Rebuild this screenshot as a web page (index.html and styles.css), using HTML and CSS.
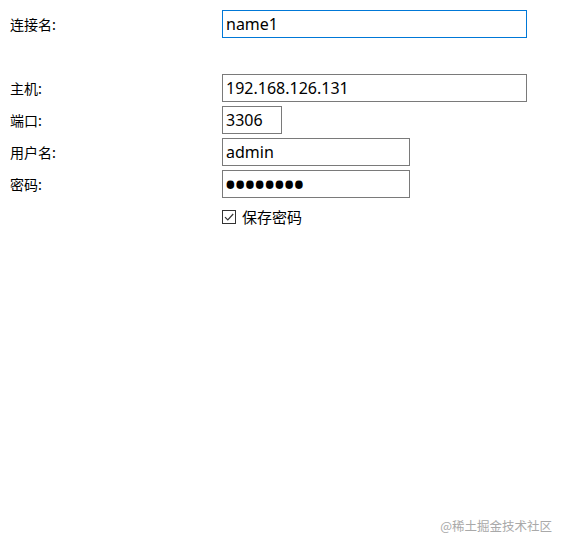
FILE: index.html
```html
<!DOCTYPE html>
<html lang="zh-CN">
<head>
    <meta charset="UTF-8">
    <meta name="viewport" content="width=device-width, initial-scale=1.0">
    <title>连接</title>
    <link rel="stylesheet" href="styles.css">
</head>
<body>
    <form class="conn-form">
        <label class="field-label" for="conn-name">连接名:</label>
        <input type="text" id="conn-name" class="field wide active" value="name1" autofocus>

        <div class="spacer"></div>

        <label class="field-label" for="host">主机:</label>
        <input type="text" id="host" class="field wide" value="192.168.126.131">

        <label class="field-label" for="port">端口:</label>
        <input type="text" id="port" class="field short" value="3306">

        <label class="field-label" for="user">用户名:</label>
        <input type="text" id="user" class="field medium" value="admin">

        <label class="field-label" for="password">密码:</label>
        <input type="password" id="password" class="field medium pwd" value="12345678">

        <div></div>
        <label class="save-pwd">
            <span class="check-box">
                <svg width="14" height="14" viewBox="0 0 14 14">
                    <rect x="0.5" y="0.5" width="13" height="13" fill="#fff" stroke="#333"/>
                    <path d="M3 7.2 L5.8 10 L11.2 4" fill="none" stroke="#333" stroke-width="1.2"/>
                </svg>
            </span>
            保存密码
        </label>
    </form>

    <div class="watermark">@稀土掘金技术社区</div>
</body>
</html>
```

FILE: styles.css
```css
body {
    margin: 0;
    padding: 10px;
    background-color: #fff;
    color: #000;
    font-family: "Noto Sans", "Noto Sans CJK SC", sans-serif;
    height: 547px;
    box-sizing: border-box;
    position: relative;
}

.conn-form {
    display: grid;
    grid-template-columns: 212px auto;
    row-gap: 4px;
    align-items: center;
}

.field-label {
    font-family: "Noto Sans CJK SC", sans-serif;
    font-size: 14px;
}

.spacer {
    grid-column: 1 / 3;
    height: 28px;
}

.field {
    box-sizing: border-box;
    height: 28px;
    margin: 0;
    padding: 0 3px;
    border: 1px solid #7a7a7a;
    border-radius: 0;
    font-family: "Noto Sans", sans-serif;
    font-size: 16px;
    color: #000;
    background-color: #fff;
}

.field:focus {
    outline: none;
}

.active {
    border-color: #0078d7;
    caret-color: #000;
}

.wide {
    width: 305px;
}

.short {
    width: 60px;
}

.medium {
    width: 188px;
}

.pwd {
    padding: 0 1px;
    font-size: 34px;
    line-height: 26px;
    letter-spacing: -3px;
}

.save-pwd {
    display: flex;
    align-items: center;
    gap: 6px;
    margin-top: 4px;
    font-family: "Noto Sans CJK SC", sans-serif;
    font-size: 15px;
}

.check-box {
    display: flex;
    width: 14px;
    height: 14px;
}

.watermark {
    position: absolute;
    right: 16px;
    bottom: 12px;
    font-family: "Noto Sans CJK SC", sans-serif;
    font-size: 12.5px;
    color: #a9a9a9;
}
```
